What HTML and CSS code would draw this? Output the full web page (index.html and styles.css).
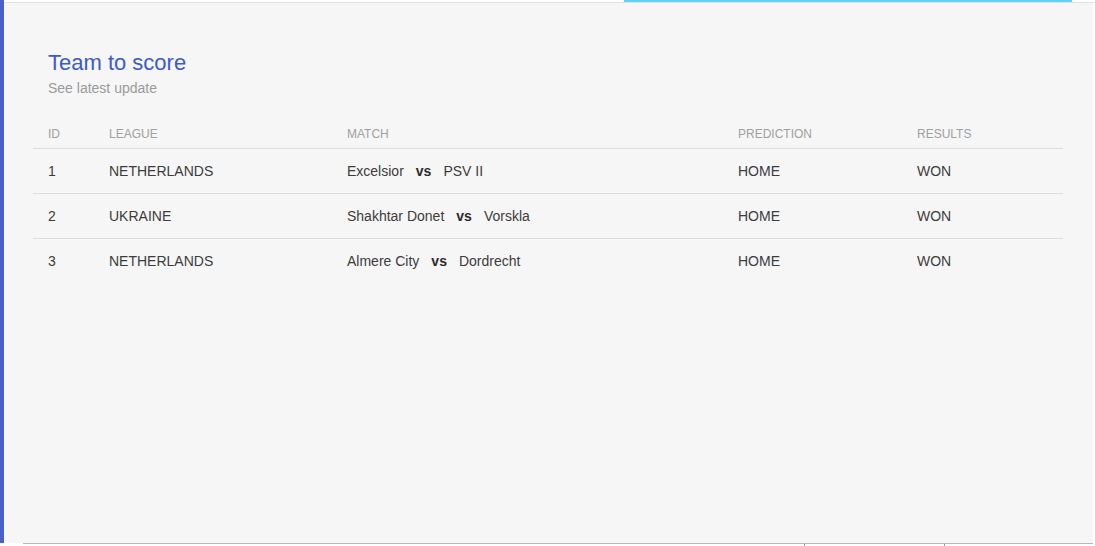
FILE: index.html
```html
<!DOCTYPE html>
<html>
<head>
<meta charset="utf-8">
<link rel="stylesheet" href="styles.css">
</head>
<body>
<div class="page">
  <div class="main">
    <div class="accent"></div>
    <div class="content">
      <div class="topbar"><div class="progress"></div></div>
      <div class="topline"></div>
      <div class="card">
        <div class="heading">
          <h1 class="title">Team to score</h1>
          <p class="subtitle">See latest update</p>
        </div>
        <table class="results">
          <thead>
            <tr>
              <th class="c-id">ID</th>
              <th class="c-league">LEAGUE</th>
              <th class="c-match">MATCH</th>
              <th class="c-pred">PREDICTION</th>
              <th class="c-res">RESULTS</th>
            </tr>
          </thead>
          <tbody>
            <tr>
              <td>1</td>
              <td>NETHERLANDS</td>
              <td>Excelsior<b class="vs">vs</b>PSV II</td>
              <td>HOME</td>
              <td>WON</td>
            </tr>
            <tr>
              <td>2</td>
              <td>UKRAINE</td>
              <td>Shakhtar Donet<b class="vs">vs</b>Vorskla</td>
              <td>HOME</td>
              <td>WON</td>
            </tr>
            <tr>
              <td>3</td>
              <td>NETHERLANDS</td>
              <td>Almere City<b class="vs">vs</b>Dordrecht</td>
              <td>HOME</td>
              <td>WON</td>
            </tr>
          </tbody>
        </table>
      </div>
    </div>
  </div>
  <div class="footer">
    <div class="seg seg-a"></div>
    <div class="seg seg-b"></div>
    <div class="seg seg-c"></div>
  </div>
</div>
</body>
</html>
```

FILE: styles.css
```css
* { box-sizing: border-box; }
html, body {
  margin: 0;
  padding: 0;
  background: #ffffff;
  width: 1095px;
  height: 546px;
  overflow: hidden;
  font-family: "Liberation Sans", Arial, sans-serif;
}
.page {
  display: flex;
  flex-direction: column;
  height: 546px;
}
.main {
  display: flex;
  height: 543px;
}
.accent {
  width: 4px;
  background: #4a5fca;
  flex: none;
}
.content {
  flex: 1;
  display: flex;
  flex-direction: column;
}
.topbar {
  height: 2px;
  display: flex;
  background: #ffffff;
}
.progress {
  margin-left: 620px;
  width: 448px;
  background: #62d3ee;
}
.topline {
  height: 1px;
  background: #e2e2e2;
}
.card {
  flex: 1;
  background: #f6f6f6;
  margin-right: 2px;
  padding: 47px 30px 0 29px;
}
.heading {
  padding-left: 15px;
}
.title {
  margin: 0;
  font-size: 22px;
  line-height: 26px;
  font-weight: normal;
  color: #3d5bc6;
}
.subtitle {
  margin: 4px 0 0;
  font-size: 14px;
  line-height: 16px;
  color: #9a9a9a;
}
.results {
  margin-top: 22px;
  width: 1030px;
  border-collapse: collapse;
  table-layout: fixed;
}
.results th {
  text-align: left;
  font-weight: normal;
  font-size: 12px;
  line-height: 14px;
  color: #a0a0a0;
  padding: 9px 15px 7px 15px;
  border-bottom: 1px solid #dcdcdc;
}
.results td {
  font-size: 14px;
  line-height: 16px;
  color: #3c3c3c;
  padding: 14px 15px 14px 15px;
  border-bottom: 1px solid #dcdcdc;
  white-space: nowrap;
}
.results tbody tr:last-child td {
  border-bottom: none;
}
.c-id { width: 61px; }
.c-league { width: 238px; }
.c-match { width: 391px; }
.c-pred { width: 179px; }
.c-res { width: 161px; }
.vs {
  font-weight: bold;
  color: #2a2a2a;
  margin: 0 12px;
}
.footer {
  height: 3px;
  margin-left: 23px;
  width: 1070px;
  border-top: 1px solid #b8b8b8;
  display: flex;
}
.seg { height: 2px; }
.seg-a { width: 782px; border-right: 1px solid #9a9a9a; }
.seg-b { width: 140px; border-right: 1px solid #9a9a9a; }
.seg-c { flex: 1; }
```
